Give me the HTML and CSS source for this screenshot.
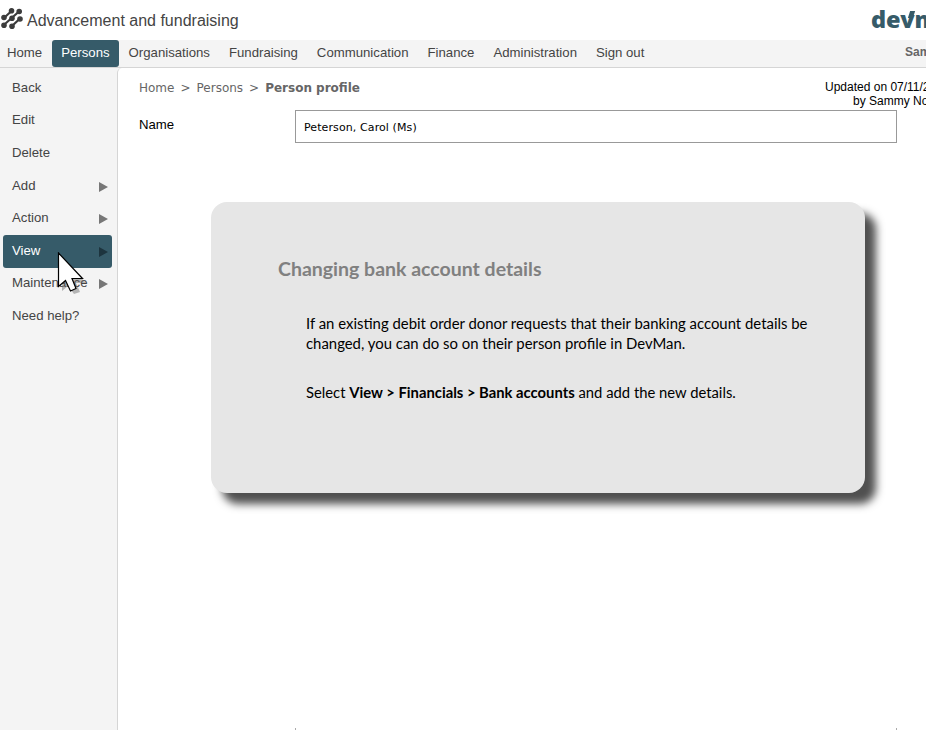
FILE: index.html
```html
<!DOCTYPE html>
<html lang="en">
<head>
<meta charset="utf-8">
<title>Person profile</title>
<link rel="stylesheet" href="styles.css">
</head>
<body>
<header class="top">
  <svg class="mark" width="23" height="24" viewBox="0 0 23 24" fill="#3c3c3c" stroke="#3c3c3c" stroke-width="2.2" stroke-linecap="round">
    <path d="M4.500 10.500 11.500 4M3.800 18 19 4.500M12 19 20 11.500" fill="none"/>
    <g stroke-width="1.400"><circle cx="11.500" cy="3.700" r="2.100"/><circle cx="19.200" cy="4.500" r="2.100"/><circle cx="4" cy="10.500" r="2.100"/><circle cx="12" cy="11.300" r="2.100"/><circle cx="20" cy="12" r="2.100"/><circle cx="4" cy="18.300" r="2.100"/><circle cx="12" cy="19.200" r="2.100"/></g>
  </svg>
  <h1 class="title">Advancement and fundraising</h1>
  <div class="brand">de<span>v</span>man</div>
</header>
<nav class="nav">
  <a class="nav-home">Home</a><a class="active">Persons</a><a>Organisations</a><a>Fundraising</a><a>Communication</a><a>Finance</a><a>Administration</a><a>Sign out</a>
  <span class="user">Sammy</span>
</nav>
<div class="body">
  <aside class="side">
    <a>Back</a><a>Edit</a><a>Delete</a>
    <a>Add<i></i></a><a>Action<i></i></a><a class="selected">View<i></i></a><a>Maintenance<i></i></a>
    <a>Need help?</a>
  </aside>
  <main class="page">
    <div class="crumbs"><span>Home</span><span class="sep">&gt;</span><span>Persons</span><span class="sep">&gt;</span><b>Person profile</b></div>
    <div class="updated"><div>Updated on 07/11/2018</div><div class="by">by Sammy Nolan</div></div>
    <div class="field"><label>Name</label><div class="input">Peterson, Carol (Ms)</div></div>
    <section class="card">
      <h2>Changing bank account details</h2>
      <p>If an existing debit order donor requests that their banking account details be</p>
      <p>changed, you can do so on their person profile in DevMan.</p>
      <p class="step">Select <b>View &gt; Financials &gt; Bank accounts</b> and add the new details.</p>
    </section>
    <div class="stub"></div>
  </main>
</div>
<svg class="cursor" width="32" height="46" viewBox="0 0 32 46">
  <path d="M5 6V39L11 34 17 42 23 40 19 31H29Z" fill="#666" opacity=".45"/>
  <path d="M1.500 1V34.500L8.500 28.500 13.500 39 19 36.500 15 26.500H25.500Z" fill="#fff" stroke="#000" stroke-width="1.200"/>
</svg>
</body>
</html>
```
FILE: styles.css
```css
* { box-sizing: border-box; }
body { margin: 0; width: 926px; height: 730px; overflow: hidden; background: #fff; font: 13.200px/16px "Liberation Sans", Arial, sans-serif; color: #444; position: relative; }
.top { height: 40px; display: flex; align-items: flex-start; }
.mark { margin-top: 7px; flex: none; }
.title { margin: 11px 0 0 4px; font-size: 16px; line-height: 20px; font-weight: 400; white-space: nowrap; }
.brand { margin: 5px 0 0 auto; width: 55px; flex: none; font: 800 23.500px/28px "Open Sans", sans-serif; letter-spacing: -.2px; color: #365b69; white-space: nowrap; }
.brand span { position: relative; }
.brand span::after { content: ""; position: absolute; right: 0; top: 8px; width: 5px; height: 7px; background: #365b69; transform: skewX(-18deg); }
.nav { height: 28px; background: #f4f4f4; display: flex; border-bottom: 1px solid #d5d5d5; white-space: nowrap; overflow: hidden; }
.nav a { padding: 0 9px 0 10px; line-height: 25px; height: 27px; }
.nav .nav-home { padding-left: 7px; padding-right: 10px; }
.nav .active { background: #365b69; color: #fff; border-radius: 3px; padding: 0 9px; }
.user { margin-left: auto; width: 21px; font-weight: bold; font-size: 12px; line-height: 24px; color: #666; }
.body { display: flex; height: 662px; background: #f4f4f4; }
.side { width: 117px; flex: none; padding: 4px 5px 0 3px; display: flex; flex-direction: column; }
.side a { height: 32.600px; line-height: 29px; padding: 0 4px 2px 9px; display: flex; justify-content: space-between; align-items: center; }
.side i { border: 5px solid transparent; border-left: 9px solid #777; border-right: 0; margin-top: 3px; }
.side .selected { background: #365b69; color: #fff; border-radius: 3px; }
.side .selected i { border-left-color: #1d343e; }
.page { flex: 1; min-width: 0; background: #fff; border-left: 1px solid #d5d5d5; border-top-left-radius: 5px; display: grid; grid-template-columns: 1fr 101px; grid-template-rows: 42px 33px auto 1fr; overflow: hidden; }
.crumbs { padding: 12px 0 0 21px; font: 12px/17px "DejaVu Sans", sans-serif; color: #666; white-space: nowrap; }
.sep { margin: 0 6px; }
.updated { padding-top: 12px; font-size: 12px; line-height: 14px; color: #000; white-space: nowrap; }
.by { padding-left: 28px; }
.field { grid-column: 1 / 3; display: flex; color: #000; }
.field label { width: 177px; padding: 7px 0 0 21px; }
.input { width: 602px; height: 33px; border: 1px solid #999; padding: 0 8px; font: 11px/33px "DejaVu Sans", sans-serif; letter-spacing: .1px; }
.card { grid-column: 1 / 3; margin: 59px 0 0 93px; width: 654px; height: 291px; background: #e6e6e6; border-radius: 16px; box-shadow: 11px 11px 9px 0 #505050; padding: 54px 0 0 95px; font: 14.900px/20px Lato, sans-serif; color: #000; white-space: nowrap; }
.card h2 { margin: 0 0 31px -28px; font-size: 19.500px; line-height: 26px; color: #808080; }
.card p { margin: 0; }
.card .step { margin-top: 29px; font-size: 14.800px; }
.stub { grid-column: 1 / 3; align-self: end; margin-left: 177px; width: 602px; height: 2px; border: 1px solid #aaa; border-width: 0 1px; }
.cursor { position: absolute; left: 57px; top: 252px; }
```
